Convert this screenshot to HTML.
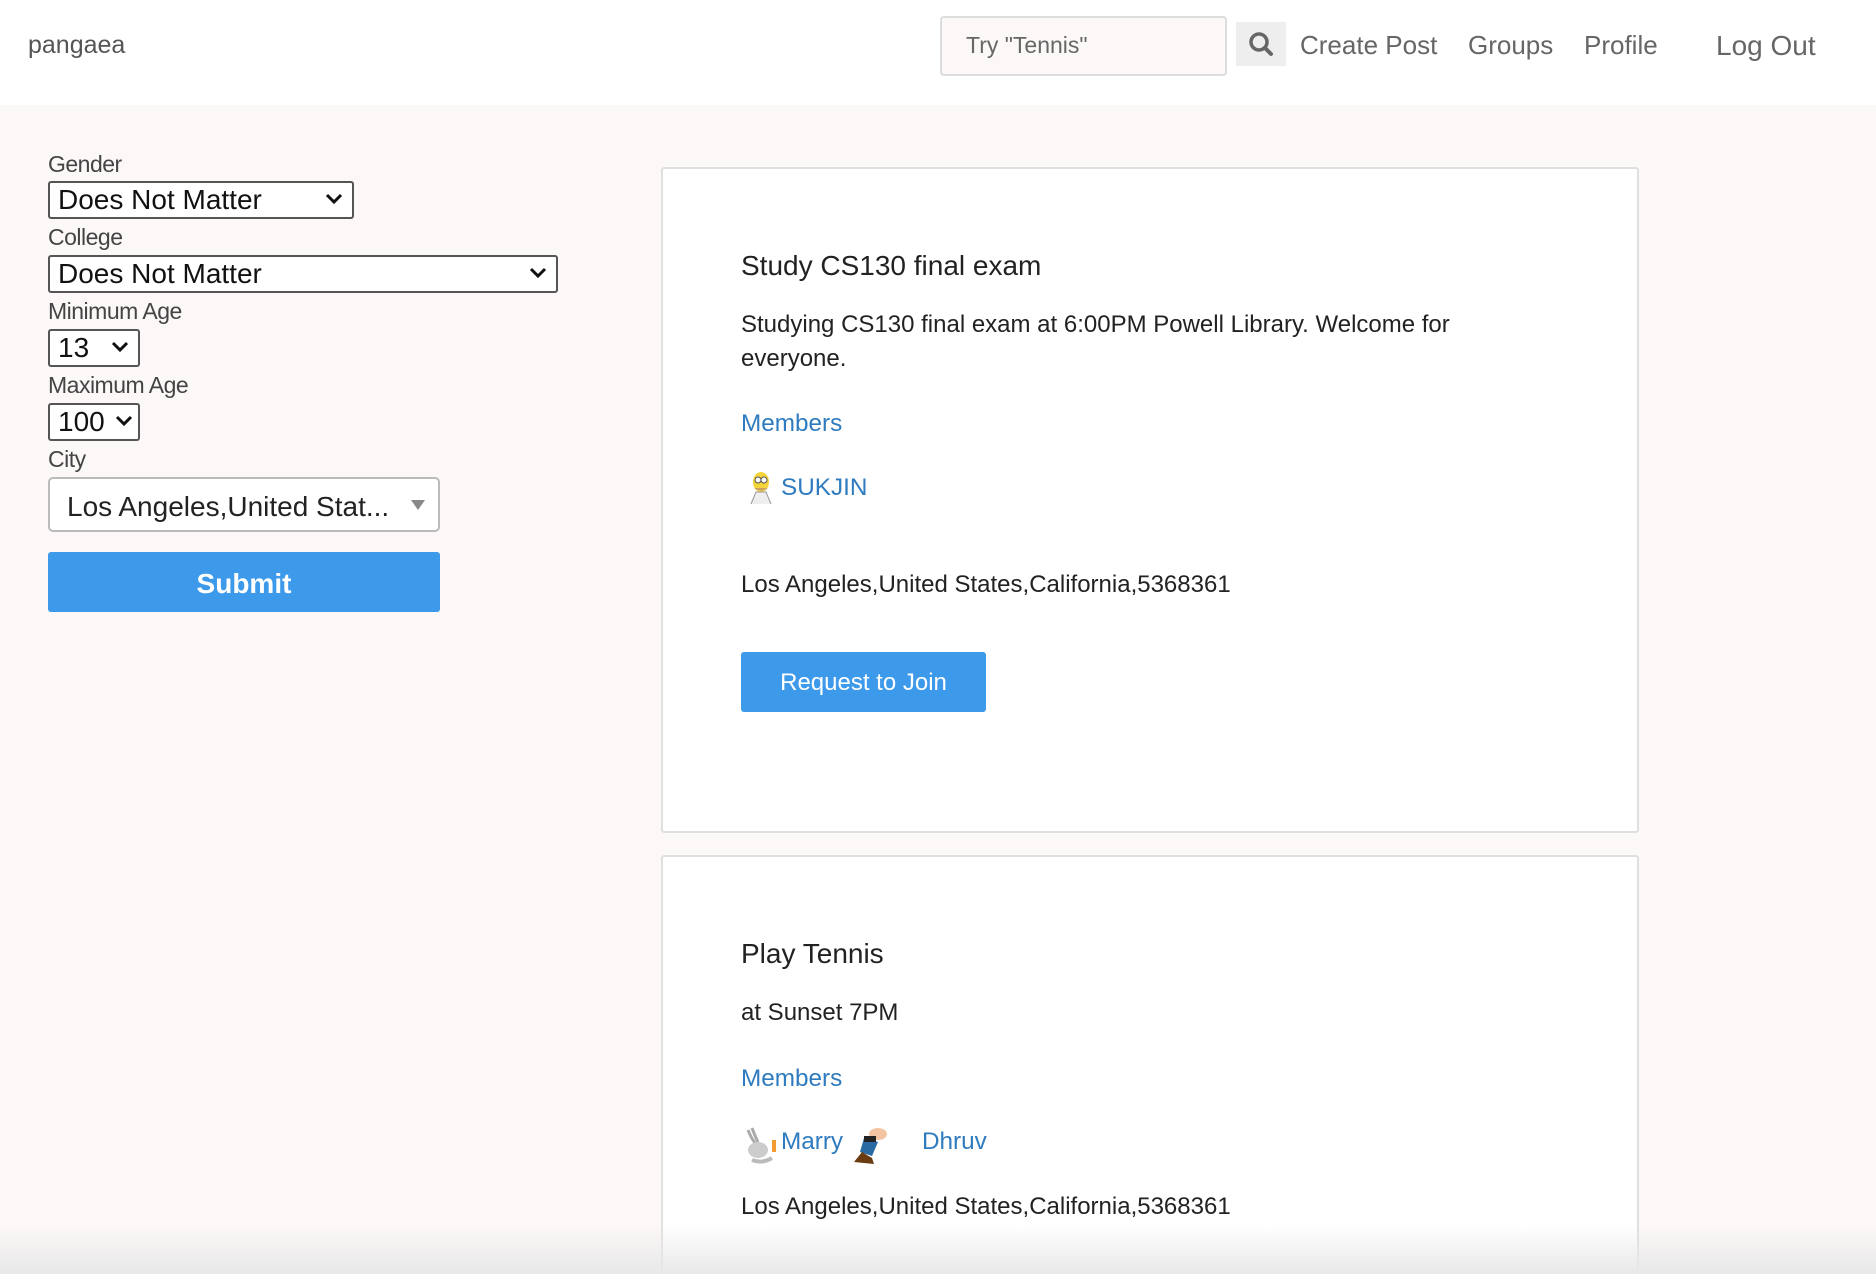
<!DOCTYPE html>
<html style="overflow:hidden;height:1274px"><head><meta charset="utf-8"><style>
*{box-sizing:border-box;margin:0;padding:0}
body{width:1876px;height:1274px;overflow:hidden;background:#fcf8f7;font-family:"Liberation Sans",sans-serif;color:#333;position:relative}
.nav{position:absolute;left:0;top:0;width:1876px;height:105px;background:#fff}
.abs{position:absolute;white-space:nowrap}
.navl{color:#666;font-size:26px}
.lbl{position:absolute;left:48px;font-size:23px;color:#444;letter-spacing:-0.5px}
.sel{position:absolute;left:48px;height:38px;border:2px solid #555;border-radius:3px;background:#fff;font-size:28px;color:#111;padding-left:8px;line-height:34px}
.sel .ch{position:absolute;right:8px;top:8px}
.card{position:absolute;left:661px;width:978px;background:#fff;border:2px solid #e0e0e0;border-radius:3px}
.t{position:absolute;left:741px;font-size:28px;color:#222;white-space:nowrap}
.b{position:absolute;left:741px;font-size:24px;color:#222;white-space:nowrap}
.m{position:absolute;left:741px;font-size:24.3px;color:#2f7bbf;white-space:nowrap}
.btn{position:absolute;background:#3d99ea;color:#fff;text-align:center;border-radius:3px}
</style></head><body>
<div class="nav"></div>
<div class="abs" style="left:28px;top:31px;font-size:25px;color:#555">pangaea</div>
<div class="abs" style="left:940px;top:16px;width:287px;height:60px;border:2px solid #ddd;border-radius:4px;background:#fcf8f7"></div>
<div class="abs" style="left:966px;top:32px;font-size:23px;color:#666">Try "Tennis"</div>
<div class="abs" style="left:1236px;top:22px;width:50px;height:44px;background:#eee">
<svg width="50" height="44" viewBox="0 0 50 44"><circle cx="23" cy="20" r="8" fill="none" stroke="#666" stroke-width="3.5"/><line x1="29" y1="26" x2="35" y2="32" stroke="#666" stroke-width="4" stroke-linecap="round"/></svg></div>
<div class="abs navl" style="left:1300px;top:30px">Create Post</div>
<div class="abs navl" style="left:1468px;top:30px">Groups</div>
<div class="abs navl" style="left:1584px;top:30px">Profile</div>
<div class="abs navl" style="left:1716px;top:30px;font-size:28px">Log Out</div>

<div class="lbl" style="top:151px">Gender</div>
<div class="sel" style="top:181px;width:306px">Does Not Matter<svg class="ch" width="20" height="16"><path d="M3 4l7 7 7-7" stroke="#111" stroke-width="3" fill="none"/></svg></div>
<div class="lbl" style="top:224px">College</div>
<div class="sel" style="top:255px;width:510px">Does Not Matter<svg class="ch" width="20" height="16"><path d="M3 4l7 7 7-7" stroke="#111" stroke-width="3" fill="none"/></svg></div>
<div class="lbl" style="top:298px">Minimum Age</div>
<div class="sel" style="top:329px;width:92px">13<svg class="ch" width="20" height="16"><path d="M3 4l7 7 7-7" stroke="#111" stroke-width="3" fill="none"/></svg></div>
<div class="lbl" style="top:372px">Maximum Age</div>
<div class="sel" style="top:403px;width:92px">100<svg class="ch" style="right:4px" width="20" height="16"><path d="M3 4l7 7 7-7" stroke="#111" stroke-width="3" fill="none"/></svg></div>
<div class="lbl" style="top:446px">City</div>
<div class="abs" style="left:48px;top:477px;width:392px;height:55px;border:2px solid #bbb;border-radius:5px;background:#fff;font-size:28px;color:#222;padding:12px 0 0 17px">Los Angeles,United Stat...<svg style="position:absolute;right:12px;top:20px" width="16" height="12"><path d="M1 1h14l-7 10z" fill="#888"/></svg></div>
<div class="btn" style="left:48px;top:552px;width:392px;height:60px;font-size:28px;font-weight:bold;line-height:64px">Submit</div>

<div class="card" style="top:167px;height:666px"></div>
<div class="t" style="top:250px">Study CS130 final exam</div>
<div class="b" style="top:311px">Studying CS130 final exam at 6:00PM Powell Library. Welcome for</div>
<div class="b" style="top:345px">everyone.</div>
<div class="m" style="top:410px">Members</div>
<svg class="abs" style="left:746px;top:470px" width="30" height="36"><ellipse cx="15" cy="12" rx="8" ry="10" fill="#f5d33a"/><circle cx="12" cy="10" r="3" fill="#fff" stroke="#555"/><circle cx="18" cy="10" r="3" fill="#fff" stroke="#555"/><path d="M8 18q7 5 14 0" fill="#c9a26a"/><path d="M5 34l5-12h10l5 12" fill="#eee" stroke="#999"/></svg>
<div class="m" style="left:781px;top:474px">SUKJIN</div>
<div class="b" style="top:571px">Los Angeles,United States,California,5368361</div>
<div class="btn" style="left:741px;top:652px;width:245px;height:60px;font-size:24px;line-height:62px">Request to Join</div>

<div class="card" style="top:855px;height:440px"></div>
<div class="t" style="top:938px">Play Tennis</div>
<div class="b" style="top:999px">at Sunset 7PM</div>
<div class="m" style="top:1065px">Members</div>
<svg class="abs" style="left:742px;top:1126px" width="38" height="38"><path d="M6 4q4 10 8 14M10 2q3 8 6 14" stroke="#aaa" stroke-width="3" fill="none"/><ellipse cx="16" cy="24" rx="10" ry="8" fill="#ccc"/><path d="M10 34q10 4 20 -2" stroke="#bbb" stroke-width="4" fill="none"/><rect x="30" y="14" width="4" height="12" fill="#f39c32"/></svg>
<div class="m" style="left:781px;top:1128px">Marry</div>
<svg class="abs" style="left:852px;top:1126px" width="36" height="38"><ellipse cx="26" cy="8" rx="9" ry="6" fill="#f3c4a2"/><path d="M12 12l14 4-6 14-12-4z" fill="#2a6aa3"/><rect x="12" y="10" width="12" height="6" fill="#222"/><path d="M2 36l8-10 10 6 2 6z" fill="#6b3b12"/></svg>
<div class="m" style="left:922px;top:1128px">Dhruv</div>
<div class="b" style="top:1193px">Los Angeles,United States,California,5368361</div>
<div class="abs" style="left:0;top:1225px;width:1876px;height:49px;background:linear-gradient(rgba(240,240,240,0),rgba(232,232,232,1))"></div>
</body></html>
